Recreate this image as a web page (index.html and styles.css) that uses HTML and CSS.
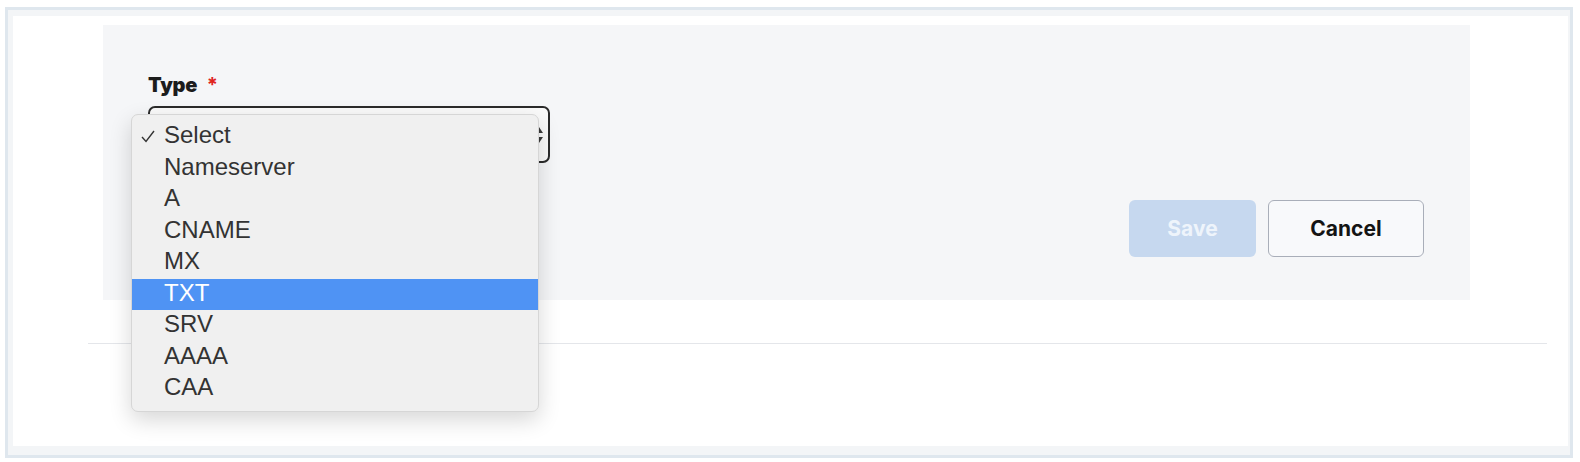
FILE: index.html
```html
<!DOCTYPE html>
<html lang="en">
<head>
    <meta charset="UTF-8">
    <meta name="viewport" content="width=device-width, initial-scale=1.0">
    <title>Add Record</title>
    <link rel="stylesheet" href="styles.css">
</head>
<body>

<div class="frame">
    <div class="card">
        <div class="form-panel">
            <label class="field-label" for="recordType">Type <span class="required">*</span></label>

            <div class="select-wrap">
                <div class="select-box" id="recordType">
                    <svg class="select-arrows" width="8" height="20" viewBox="0 0 8 20">
                        <path d="M0 8 L4 2 L8 8 Z" fill="#3a3a3a"/>
                        <path d="M0 12 L4 18 L8 12 Z" fill="#3a3a3a"/>
                    </svg>
                </div>

                <!-- open native-looking option list -->
                <ul class="option-list">
                    <li class="option checked">
                        <svg class="check" width="14" height="13" viewBox="0 0 14 13">
                            <path d="M1 7 L5 11.5 L13 1" fill="none" stroke="#333" stroke-width="1.4"/>
                        </svg>
                        Select
                    </li>
                    <li class="option">Nameserver</li>
                    <li class="option">A</li>
                    <li class="option">CNAME</li>
                    <li class="option">MX</li>
                    <li class="option active">TXT</li>
                    <li class="option">SRV</li>
                    <li class="option">AAAA</li>
                    <li class="option">CAA</li>
                </ul>
            </div>

            <div class="form-actions">
                <button class="btn btn-save" disabled>Save</button>
                <button class="btn btn-cancel">Cancel</button>
            </div>
        </div>

        <hr class="divider">
    </div>
</div>

</body>
</html>
```

FILE: styles.css
```css
body {
    margin: 0;
    background-color: #fff;
    font-family: Inter, "Liberation Sans", sans-serif;
}

.frame {
    margin: 7px 7px 5px 5px;
    padding: 6px 2px 9px 5px;
    border: 3px solid #dfe7ee;
    background-color: #f3f5f7;
}

.card {
    height: 430px;
    padding-top: 9px;
    box-sizing: border-box;
    background-color: #fff;
}

.form-panel {
    width: 1367px;
    margin-left: 90px;
    padding: 48px 46px 43px 45px;
    box-sizing: border-box;
    background-color: #f5f6f8;
}

.field-label {
    display: block;
    font-size: 20px;
    line-height: 24px;
    font-weight: 900;
    color: #1c1c1c;
    letter-spacing: -0.3px;
}

.required {
    color: #e0241f;
    margin-left: 6px;
    font-weight: 700;
}

.select-wrap {
    position: relative;
    width: 402px;
    margin-top: 9px;
}

.select-box {
    height: 57px;
    box-sizing: border-box;
    border: 2px solid #2b2b2b;
    border-radius: 7px;
    background-color: #fafafa;
    display: flex;
    align-items: center;
    justify-content: flex-end;
    padding-right: 5px;
}

.option-list {
    position: absolute;
    left: -17px;
    top: 8px;
    width: 408px;
    margin: 0;
    padding: 6px 0;
    list-style: none;
    background-color: #f0f0f0;
    border: 1px solid #d6d6d6;
    border-radius: 7px;
    box-shadow: 0 8px 22px rgba(0, 0, 0, 0.16);
    box-sizing: border-box;
    font-family: "Liberation Sans", Arial, sans-serif;
    font-size: 24px;
    color: #333;
}

.option {
    position: relative;
    height: 31.5px;
    line-height: 28px;
    padding-left: 32px;
}

.option .check {
    position: absolute;
    left: 9px;
    top: 9px;
}

.option.active {
    background-color: #4f93f4;
    color: #fff;
}

.form-actions {
    display: flex;
    justify-content: flex-end;
    gap: 12px;
    margin-top: 37px;
}

.btn {
    height: 57px;
    border-radius: 6px;
    font-family: Inter, "Liberation Sans", sans-serif;
    font-size: 21px;
    font-weight: 700;
    cursor: pointer;
}

.btn-save {
    width: 127px;
    border: none;
    background-color: #c6d8ef;
    color: #eef4fb;
}

.btn-cancel {
    width: 156px;
    border: 1.5px solid #a9aeb9;
    background-color: #f8f9fb;
    color: #141414;
}

.divider {
    margin: 43px 21px 0 75px;
    border: none;
    border-top: 1.5px solid #e4e6ea;
}
```
